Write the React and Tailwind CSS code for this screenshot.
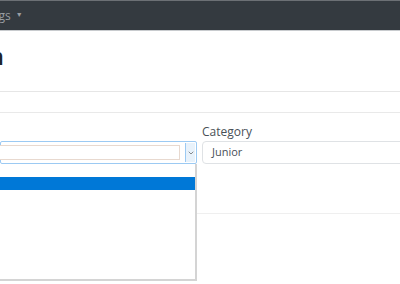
import { ChevronDown } from 'lucide-react'

export default function App() {
  return (
    <div className="relative w-[400px] h-[284px] overflow-hidden bg-white" style={{ fontFamily: '"Open Sans", "Liberation Sans", sans-serif' }}>
      {/* Navbar */}
      <div className="h-[31px] bg-[#343a40] border-t border-[#6c7075] border-b border-b-[#c8cbce] flex items-center">
        <span className="text-[12px] text-[#9a9ea3] -ml-[12px]">ings</span>
        <span className="ml-[5px] text-[7px] text-[#9a9ea3]">▼</span>
      </div>

      {/* Heading */}
      <div className="h-[60px] pt-[13px]">
        <h1 className="text-[24px] font-semibold text-[#212529] -ml-[26px] leading-[24px]">on</h1>
      </div>
      <div className="border-t border-[#e6e6e6]" />
      <div className="h-[20px]" />
      <div className="border-t border-[#e9e9e9]" />

      {/* Form row */}
      <div className="flex mt-[10px]">
        <div className="w-[197px] pt-[18px]">
          <div className="h-[23px] border border-[#9ccaf3] rounded-[2px] flex items-center pr-[1px]">
            <div className="flex-1 h-[15px] ml-[-2px] mr-[5px] border border-[#e8d9cf] bg-white" />
            <div className="w-[10px] h-[19px] bg-[#e8f2fb] border-l border-[#9ccaf3] flex items-center justify-center">
              <ChevronDown size={8} strokeWidth={2} color="#555" />
            </div>
          </div>
        </div>
        <div className="flex-1 pl-[5px]">
          <div className="text-[12px] text-[#495057] leading-[18px]">Category</div>
          <div className="h-[23px] border border-[#dfe2e5] rounded-[4px] flex items-center pl-[9px] mr-[-8px]">
            <span className="text-[11px] text-[#495057]">Junior</span>
          </div>
        </div>
      </div>

      <div className="mt-[49px] border-t border-[#efefef]" />

      {/* Open select list */}
      <div className="absolute left-0 top-[164px] w-[197px] h-[117px] bg-white border-r-2 border-b-2 border-[#d4d4d4]">
        <div className="h-[13px]" />
        <div className="h-[13px] bg-[#0078d7]" />
      </div>
    </div>
  )
}
